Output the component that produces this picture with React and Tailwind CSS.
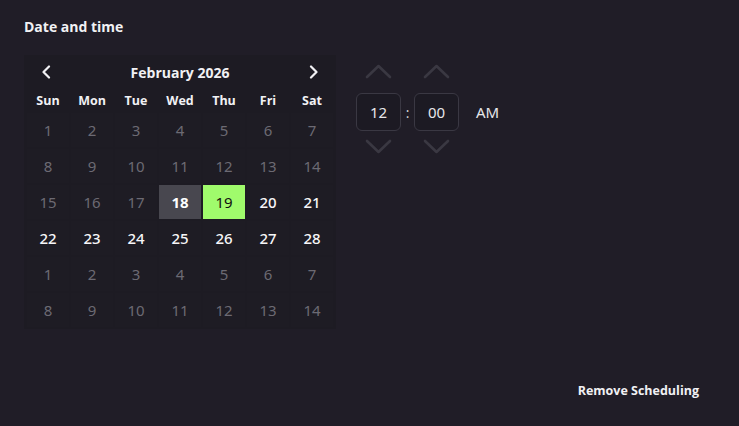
import React, { useState } from "react";

const DAYS = ["Sun", "Mon", "Tue", "Wed", "Thu", "Fri", "Sat"];

// 6 rows, feb 2026 starts on sunday
const buildCells = () => {
  const cells = [];
  for (let i = 1; i <= 14; i++) cells.push({ d: i, muted: true });
  for (let i = 15; i <= 28; i++) cells.push({ d: i, muted: i < 18 });
  for (let i = 1; i <= 14; i++) cells.push({ d: i, muted: true, next: true });
  return cells;
};

const Chevron = ({ dir = "up", className = "" }) => (
  <svg width="27" height="15" viewBox="0 0 27 15" className={className} fill="none">
    {dir === "up" ? (
      <path d="M2 13 L13.5 2 L25 13" stroke="currentColor" strokeWidth="2.6" strokeLinecap="round" strokeLinejoin="round" />
    ) : (
      <path d="M2 2 L13.5 13 L25 2" stroke="currentColor" strokeWidth="2.6" strokeLinecap="round" strokeLinejoin="round" />
    )}
  </svg>
);

const Arrow = ({ dir }) => (
  <svg width="10" height="14" viewBox="0 0 10 14" fill="none">
    <path d={dir === "left" ? "M8 1.5 L2.5 7 L8 12.5" : "M2 1.5 L7.5 7 L2 12.5"} stroke="currentColor" strokeWidth="2.2" strokeLinecap="round" strokeLinejoin="round" />
  </svg>
);

const TimeBox = ({ value }) => (
  <div className="flex flex-col items-center">
    <Chevron dir="up" className="text-[#3a3842]" />
    <div className="mt-[14px] mb-[8px] w-[45px] h-[38px] rounded-md border border-[#3a3843] bg-[#1c1a23] flex items-center justify-center text-[15px] text-[#e6e6ea]" style={{ fontFamily: "'Noto Sans', sans-serif" }}>
      {value}
    </div>
    <Chevron dir="down" className="text-[#3a3842]" />
  </div>
);

export default function App() {
  const [selected, setSelected] = useState(19);
  const cells = buildCells();

  return (
    <div className="w-[739px] h-[426px] bg-[#201d27] relative text-[#f1f1f4]" style={{ fontFamily: "'Open Sans', Lato, sans-serif" }}>
      <div className="pt-[17px] pl-[24px]">
        <div className="text-[14px] font-bold leading-[20px]">Date and time</div>

        <div className="flex mt-[18px]">
          {/* calendar */}
          <div className="w-[312px] bg-[#1d1b23] pb-[2px]">
            <div className="flex items-center h-[34px]">
              <button className="w-[44px] h-[34px] flex items-center justify-center text-[#f1f1f4]">
                <Arrow dir="left" />
              </button>
              <div className="flex-1 text-center text-[14px] font-bold">February 2026</div>
              <button className="w-[44px] h-[34px] flex items-center justify-center text-[#f1f1f4]">
                <Arrow dir="right" />
              </button>
            </div>
            <div className="grid grid-cols-7 gap-x-[2px] px-[3px] h-[24px] items-center">
              {DAYS.map((d) => (
                <div key={d} className="text-center text-[12.5px] font-bold">{d}</div>
              ))}
            </div>
            <div className="grid grid-cols-7 gap-x-[2px] gap-y-[2px] px-[3px]">
              {cells.map((c, i) => {
                const isSel = !c.next && c.d === selected && !c.muted;
                const isToday = !c.next && c.d === 18 && i > 13;
                let cls = "text-[#f6f6f8] bg-[#1e1c24] font-medium";
                if (c.muted) cls = "text-[#6c6a73] bg-[#1e1c24]";
                if (isToday) cls = "bg-[#48474f] text-white font-bold";
                if (isSel) cls = "bg-[#a0fb6c] text-[#101010]";
                return (
                  <div
                    key={i}
                    onClick={() => !c.muted && setSelected(c.d)}
                    className={`h-[34px] flex items-center justify-center text-[15px] cursor-pointer ${cls}`}
                    style={{ fontFamily: "'Noto Sans', sans-serif" }}
                  >
                    {c.d}
                  </div>
                );
              })}
            </div>
          </div>

          {/* time */}
          <div className="flex items-start ml-[20px] mt-[9px]">
            <TimeBox value="12" />
            <div className="h-[38px] mt-[29px] w-[13px] flex items-center justify-center text-[14px] text-[#d8d8dc]">:</div>
            <TimeBox value="00" />
            <div className="h-[38px] mt-[29px] ml-[17px] flex items-center text-[15px] text-[#e6e6ea]" style={{ fontFamily: "'Noto Sans', sans-serif" }}>AM</div>
          </div>
        </div>
      </div>

      <button className="absolute right-[40px] bottom-[25px] text-[12.5px] font-bold text-[#f1f1f4]">Remove Scheduling</button>
    </div>
  );
}
